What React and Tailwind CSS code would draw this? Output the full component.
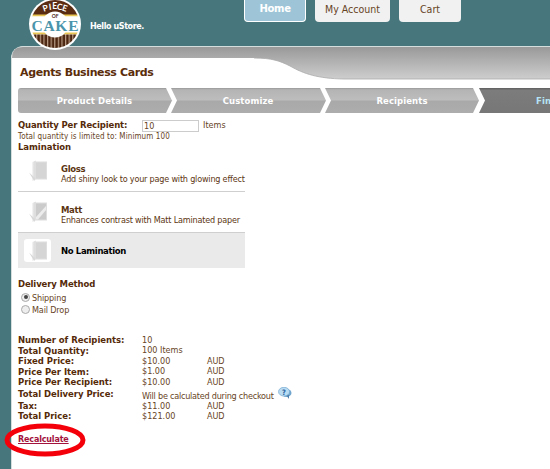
import React from 'react';

const bold = "font-['DejaVu_Sans',sans-serif] font-bold";

function Logo() {
  return (
    <svg width="52" height="52" viewBox="0 0 52 52" className="block">
      <defs>
        <clipPath id="disc"><circle cx="26" cy="25" r="24" /></clipPath>
        <pattern id="stripes" width="3.6" height="10" patternUnits="userSpaceOnUse">
          <rect width="3.6" height="10" fill="#4c2611" />
          <rect width="1.2" height="10" fill="#b79b84" />
        </pattern>
      </defs>
      <circle cx="26" cy="25" r="26" fill="#fff" />
      <g clipPath="url(#disc)">
        <rect width="52" height="16" fill="#5a2d13" />
        <rect y="15.5" width="52" height="2" fill="#e9c553" />
        <rect y="17.5" width="52" height="17" fill="#fff" />
        <rect y="33.5" width="52" height="2" fill="#e9c553" />
        <rect y="35.5" width="52" height="16" fill="url(#stripes)" />
        <circle cx="26" cy="25.5" r="13" fill="#fff" />
      </g>
      <g fill="#fff" fontFamily="Lato, sans-serif" fontWeight="700" fontSize="8.5" textAnchor="middle">
        <text x="17.2" y="12" transform="rotate(-18 17.2 12)">P</text>
        <text x="21.5" y="10.8" transform="rotate(-8 21.5 10.8)">I</text>
        <text x="25.6" y="10.4">E</text>
        <text x="30.3" y="10.8" transform="rotate(8 30.3 10.8)">C</text>
        <text x="34.8" y="12" transform="rotate(18 34.8 12)">E</text>
      </g>
      <text x="26.2" y="18.5" fill="#4c2611" fontFamily="Lato, sans-serif" fontWeight="700" fontSize="5" textAnchor="middle">OF</text>
      <text x="2.5" y="32" fill="#4a94ac" fontFamily="Liberation Serif, serif" fontWeight="700" fontSize="15.5" textLength="47">CAKE</text>
    </svg>
  );
}

function LaminationIcon({ matt }) {
  return (
    <svg width="20" height="22" viewBox="0 0 20 22" className="block">
      <path d="M3.5 2 L7 0.5 V19 L3.5 21 Z" fill="#e4e4e4" />
      <rect x="5" y="1.5" width="13" height="18" fill="#dedede" />
      <rect x="7" y="2.5" width="10" height="16" fill={matt ? '#cbcbcb' : '#d5d5d5'} />
      {matt && <path d="M7 16 L17 5 V9 L9 18.5 H7 Z" fill="#ececec" />}
      <path d="M0 12.5 L6 18 V21 L4 19 Z" fill="#d8d8d8" />
    </svg>
  );
}

function Steps() {
  return (
    <div className="ml-[6px] grid h-[25px] w-[532px] grid-cols-1 grid-rows-1">
      <svg width="532" height="25" className="col-start-1 row-start-1 block">
        <defs>
          <linearGradient id="step" x2="0" y2="1">
            <stop offset="0" stopColor="#999" />
            <stop offset=".07" stopColor="#b4b4b4" />
            <stop offset=".48" stopColor="#bdbdbd" />
            <stop offset=".52" stopColor="#a9a9a9" />
            <stop offset="1" stopColor="#adadad" />
          </linearGradient>
          <linearGradient id="active" x2="0" y2="1">
            <stop offset="0" stopColor="#5f5f5f" />
            <stop offset=".1" stopColor="#7c7c7c" />
            <stop offset="1" stopColor="#777" />
          </linearGradient>
        </defs>
        <path d="M3 0 H148 L154 12.5 L148 25 H3 Q0 25 0 22 V3 Q0 0 3 0" fill="url(#step)" />
        <path d="M153 0 H302 L308 12.5 L302 25 H153 L159 12.5Z" fill="url(#step)" />
        <path d="M307 0 H455 L461 12.5 L455 25 H307 L313 12.5Z" fill="url(#step)" />
        <path d="M461 0 H532 V25 H461 L467 12.5Z" fill="url(#active)" />
      </svg>
      <div className={`${bold} col-start-1 row-start-1 grid grid-cols-[153px_154px_154px_71px] items-center overflow-hidden text-center text-[8.5px] leading-[26px] tracking-[0.1px] whitespace-nowrap text-white`}>
        <span>Product Details</span>
        <span>Customize</span>
        <span>Recipients</span>
        <span className="pl-[57px] text-left text-[#b5e3f5]">Fin</span>
      </div>
    </div>
  );
}

function Option({ title, text, matt, selected }) {
  return (
    <div className={`flex w-[227px] items-center ${selected ? 'h-[35px] bg-[#eaeaea]' : 'h-[41px] border-b border-[#cfcfcf]'}`}>
      <div className={`ml-[6px] flex h-[23px] w-[27px] shrink-0 items-center justify-center rounded-[3px] pl-[2px] ${selected ? 'bg-white' : ''}`}>
        <LaminationIcon matt={matt} />
      </div>
      <div className={`ml-[10px] whitespace-nowrap ${selected ? '' : 'pt-[5px]'}`}>
        <div className={`${bold} text-[8.5px] leading-[10px] tracking-[-0.35px] ${selected ? 'text-black' : ''}`}>{title}</div>
        {text && <div className="text-[9px] leading-[10px] tracking-[-0.2px]">{text}</div>}
      </div>
    </div>
  );
}

function Row({ label, value, currency }) {
  return (
    <div className="flex h-[10.6px] items-center">
      <div className={`${bold} w-[124px] text-[8.5px] tracking-[-0.03px] text-[#552a09]`}>{label}</div>
      <div className="w-[65px]">{value}</div>
      <div className="tracking-[-0.1px]">{currency}</div>
    </div>
  );
}

export default function App() {
  return (
    <div className="h-[469px] w-[550px] overflow-hidden bg-[#47777c] font-['DejaVu_Sans_Condensed','DejaVu_Sans',sans-serif] text-[9px] text-[#674425]">
      <header className="relative z-10 flex h-[46px] items-start">
        <div className="-mt-[1px] ml-[29px] h-[52px] w-[52px]"><Logo /></div>
        <div className={`${bold} mt-[20px] ml-[9px] w-[154px] text-[8px] leading-[13px] tracking-[-0.4px] text-white`}>Hello uStore.</div>
        <nav className="flex gap-[9px] text-[10.5px] leading-[18px]">
          <div className={`${bold} h-[22px] w-[62px] rounded-b-[4px] border border-t-0 border-white bg-[#9dc5d7] text-center text-[10px] tracking-[-0.3px] text-white`}>Home</div>
          <div className="h-[22px] w-[75px] rounded-b-[4px] bg-[#f1f1f1] text-center">My Account</div>
          <div className="h-[22px] w-[62px] rounded-b-[4px] bg-[#f1f1f1] text-center">Cart</div>
        </nav>
      </header>
      <main className="ml-[11px] h-[423px] w-[539px] rounded-tl-[12px] border-t border-l border-[#d5dddd] bg-white">
        <svg width="538" height="33" className="block">
          <defs>
            <linearGradient id="band" x2="0" y2="1">
              <stop offset="0" stopColor="#999" />
              <stop offset="1" stopColor="#cecece" />
            </linearGradient>
          </defs>
          <path d="M0 11 Q0 0 11 0 H538 V32 H332 C306 31.5 292 27 278 19 C268 14 260 11 242 11 Z" fill="url(#band)" />
          <path d="M242 11 C260 11 268 14 278 19 C292 27 306 31.5 332 32 H538" fill="none" stroke="#aaa" strokeWidth="0.8" />
        </svg>
        <h1 className={`${bold} -mt-[16px] ml-[8px] h-[24px] text-[11px] leading-[17px] tracking-[-0.38px] text-[#5b2d0a]`}>Agents Business Cards</h1>
        <Steps />
        <div className="ml-[6px]">
          <div className="mt-[6px] flex h-[13px] items-center">
            <div className={`${bold} w-[124px] text-[8.5px] tracking-[-0.13px] text-[#552a09]`}>Quantity Per Recipient:</div>
            <div className="h-[12px] w-[57px] border border-[#ccc] pl-[1px] leading-[10px]">10</div>
            <div className="ml-[4px]">Items</div>
          </div>
          <div className="h-[10px] text-[8px] leading-[10px] tracking-[0.1px]">Total quantity is limited to: Minimum 100</div>
          <div className={`${bold} h-[10px] text-[8.5px] leading-[11px] tracking-[-0.05px] text-[#552a09]`}>Lamination</div>
          <div className="-mt-[1px] text-[#5c3512]">
            <Option title="Gloss" text="Add shiny look to your page with glowing effect" />
            <Option title="Matt" text="Enhances contrast with Matt Laminated paper" matt />
            <Option title="No Lamination" selected />
          </div>
          <div className={`${bold} mt-[10px] mb-[1.5px] text-[8.5px] leading-[12px] tracking-[-0.12px] text-[#552a09]`}>Delivery Method</div>
          {['Shipping', 'Mail Drop'].map((name, i) => (
            <div key={name} className="flex h-[12px] items-center pt-[2px]">
              <span className="-mt-[3px] ml-[3px] flex h-[9px] w-[9px] items-center justify-center rounded-full border border-[#aaa] bg-[#eee]">
                {i === 0 && <span className="h-[4px] w-[4px] rounded-full bg-[#444]" />}
              </span>
              <span className="ml-[2px] tracking-[-0.15px]">{name}</span>
            </div>
          ))}
          <div className="mt-[19.5px]">
            <Row label="Number of Recipients:" value="10" />
            <Row label="Total Quantity:" value="100 Items" />
            <Row label="Fixed Price:" value="$10.00" currency="AUD" />
            <Row label="Price Per Item:" value="$1.00" currency="AUD" />
            <Row label="Price Per Recipient:" value="$10.00" currency="AUD" />
            <div className="flex h-[13px] items-center">
              <div className={`${bold} w-[124px] text-[8.5px] tracking-[-0.03px] text-[#552a09]`}>Total Delivery Price:</div>
              <div className="pt-[4px] tracking-[-0.23px] whitespace-nowrap">Will be calculated during checkout</div>
              <svg width="14" height="12" viewBox="0 0 14 12" className="-mt-[3px] ml-[4px]">
                <ellipse cx="8.5" cy="6" rx="5" ry="4" fill="#6fa5cf" />
                <path d="M8 8 L11 12 L11 8Z" fill="#4e80ad" />
                <ellipse cx="6" cy="4.7" rx="5.5" ry="4.4" fill="#b9dcf2" stroke="#79aad0" strokeWidth=".7" />
                <text x="6" y="7.5" fill="#285f9c" fontSize="7.5" fontWeight="700" textAnchor="middle">?</text>
              </svg>
            </div>
            <Row label="Tax:" value="$11.00" currency="AUD" />
            <Row label="Total Price:" value="$121.00" currency="AUD" />
          </div>
          <div className="relative mt-[11px] h-[13px] w-[60px]">
            <a className={`${bold} text-[8px] leading-[13px] tracking-[-0.15px] text-[#a3123c] underline`}>Recalculate</a>
            <svg width="82" height="34" className="absolute -top-[10px] -left-[14px]">
              <ellipse cx="41" cy="17" rx="38" ry="14" fill="none" stroke="#f4000b" strokeWidth="5" />
            </svg>
          </div>
        </div>
      </main>
    </div>
  );
}
